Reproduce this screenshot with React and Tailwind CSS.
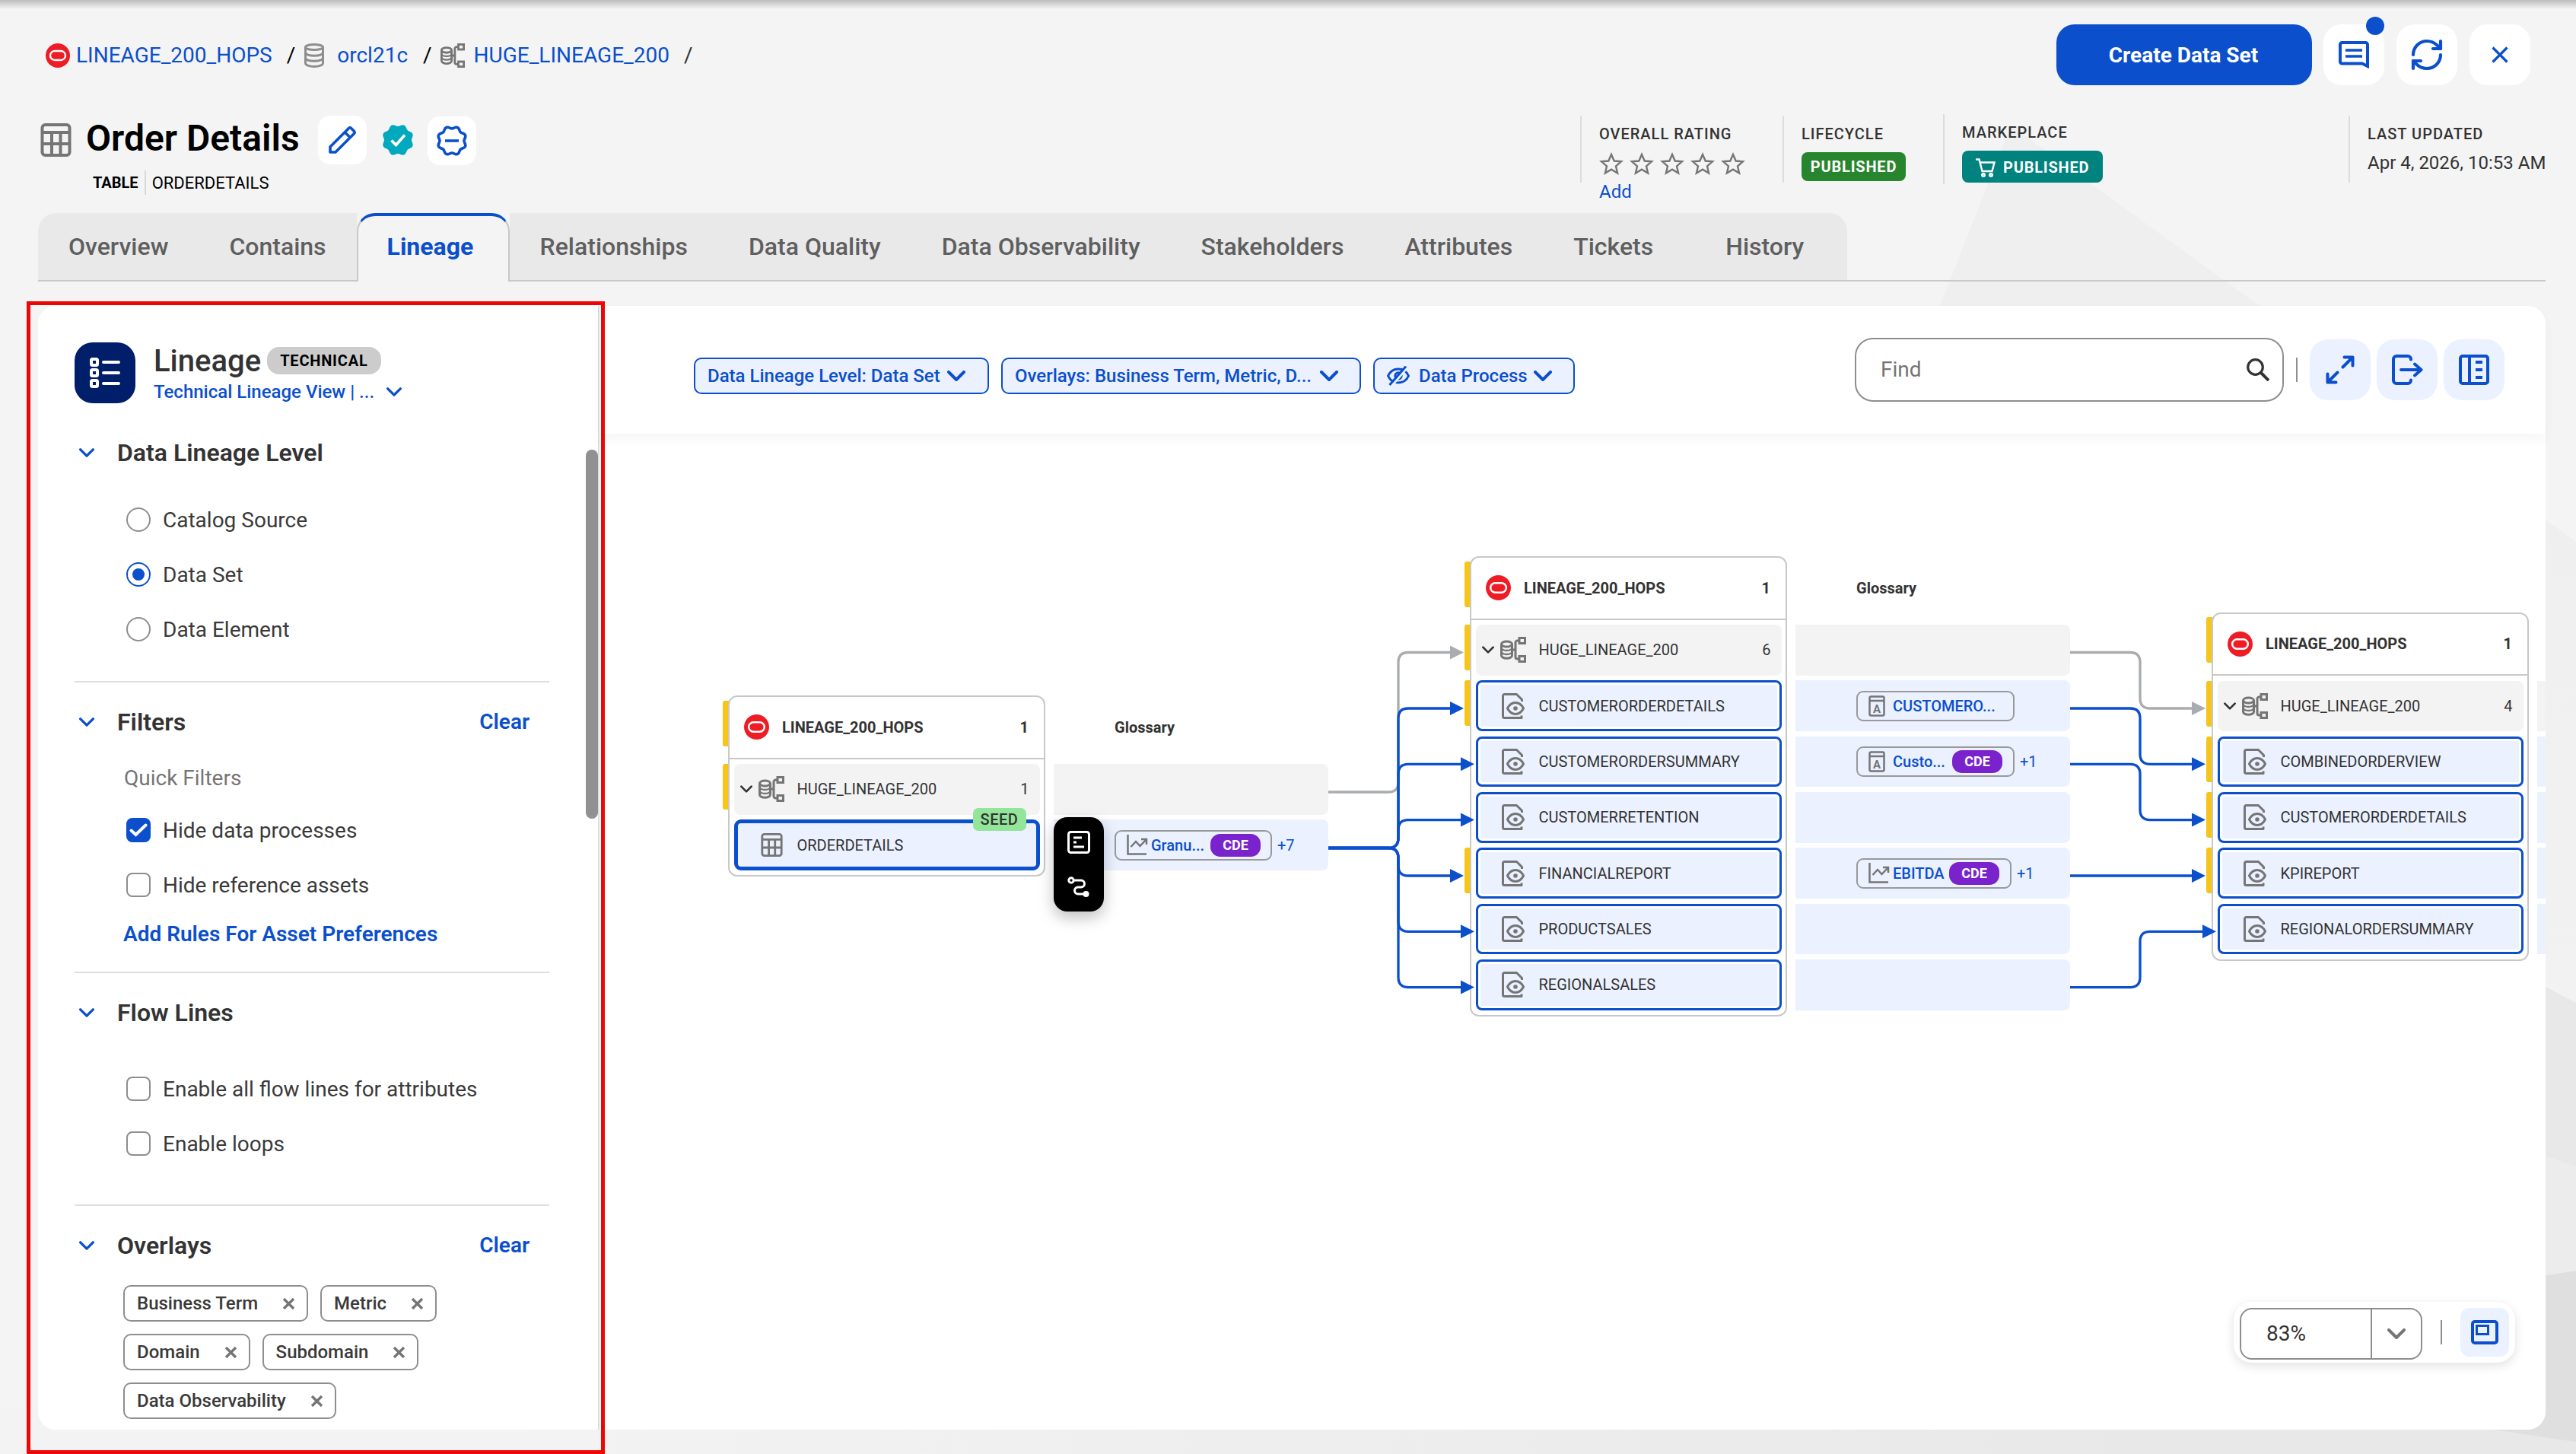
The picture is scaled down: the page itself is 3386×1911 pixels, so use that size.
import React from "react";
import { RefreshCw } from "lucide-react";

const tabs = [
  "Overview",
  "Contains",
  "Lineage",
  "Relationships",
  "Data Quality",
  "Data Observability",
  "Stakeholders",
  "Attributes",
  "Tickets",
  "History",
];

const ROW = 73.33;

// positions are canvas coordinates, right below the toolbar
const nodes = [
  {
    x: 169,
    y: 344,
    bars: [0, 1],
    schemaCount: 1,
    rows: [{ name: "ORDERDETAILS", seed: true, term: { label: "Granu...", icon: "metric", cde: true, more: "+7", width: "w-[207px]" } }],
  },
  {
    x: 1144,
    y: 161,
    bars: [0, 1, 2, 5],
    schemaCount: 6,
    rows: [
      { name: "CUSTOMERORDERDETAILS", term: { label: "CUSTOMERO...", icon: "term", width: "w-[208px]" } },
      { name: "CUSTOMERORDERSUMMARY", term: { label: "Custo...", icon: "term", cde: true, more: "+1", width: "w-[208px]" } },
      { name: "CUSTOMERRETENTION" },
      { name: "FINANCIALREPORT", term: { label: "EBITDA", icon: "metric", cde: true, more: "+1", width: "w-[204px]" } },
      { name: "PRODUCTSALES" },
      { name: "REGIONALSALES" },
    ],
  },
  {
    x: 2119,
    y: 234.5,
    bars: [0, 1, 2, 3, 4],
    schemaCount: 4,
    hideGlossaryTitle: true,
    rows: [
      { name: "COMBINEDORDERVIEW" },
      { name: "CUSTOMERORDERDETAILS" },
      { name: "KPIREPORT" },
      { name: "REGIONALORDERSUMMARY" },
    ],
  },
];

const edges = [
  { from: [958, 471], mid: 1050, to: [1136, 287.5], gray: true },
  { from: [958, 544.5], mid: 1050, to: [1136, 361] },
  { from: [958, 544.5], mid: 1050, to: [1150, 434.3] },
  { from: [958, 544.5], mid: 1050, to: [1150, 507.6] },
  { from: [958, 544.5], mid: 1050, to: [1136, 581] },
  { from: [958, 544.5], mid: 1050, to: [1150, 654.3] },
  { from: [958, 544.5], mid: 1050, to: [1150, 727.6] },
  { from: [1933, 287.5], mid: 2025, to: [2111, 361], gray: true },
  { from: [1933, 361], mid: 2025, to: [2111, 434.3] },
  { from: [1933, 434.3], mid: 2025, to: [2111, 507.6] },
  { from: [1933, 581], mid: 2025, to: [2111, 581] },
  { from: [1933, 727.6], mid: 2025, to: [2125, 654.3] },
];

const edgePath = ({ from, mid, to }) => {
  const [x1, y1] = from;
  const [x2, y2] = to;
  if (y1 === y2) return `M${x1} ${y1}H${x2 - 14}`;
  const r = 13 * Math.sign(y2 - y1);
  return `M${x1} ${y1}H${mid - 13}Q${mid} ${y1} ${mid} ${y1 + r}V${y2 - r}Q${mid} ${y2} ${mid + 13} ${y2}H${x2 - 14}`;
};

// wavy seal outline used by the certification badges
const sealPath = (c, r, amp) => {
  const pts = [];
  for (let i = 0; i < 96; i++) {
    const a = (i / 96) * Math.PI * 2;
    const d = r + amp * Math.cos(8 * a + Math.PI);
    pts.push(`${(c + d * Math.cos(a)).toFixed(2)} ${(c + d * Math.sin(a)).toFixed(2)}`);
  }
  return `M${pts.join("L")}Z`;
};

const OracleIcon = ({ className }) => (
  <svg viewBox="0 0 32 32" className={className}>
    <circle cx="16" cy="16" r="16" fill="#ee1c25" />
    <rect x="6" y="10" width="20" height="12" rx="6" fill="none" stroke="#fff" strokeWidth="2.4" />
  </svg>
);

const DatabaseIcon = ({ className }) => (
  <svg viewBox="0 0 26 32" fill="none" stroke="#8e8e8e" strokeWidth="3" className={className}>
    <ellipse cx="13" cy="5" rx="11.5" ry="3.5" />
    <path d="M1.5 5v21c0 2.5 5 4.5 11.5 4.5s11.5-2 11.5-4.5V5" />
    <path d="M1.5 12c0 2.5 5 4.3 11.5 4.3S24.5 14.500 24.5 12M1.5 19c0 2.5 5 4.3 11.5 4.3s11.5-1.8 11.5-4.3" />
  </svg>
);

const SchemaIcon = ({ className }) => (
  <svg viewBox="0 0 34 34" fill="none" stroke="#757575" strokeWidth="3" className={className}>
    <ellipse cx="8.5" cy="9.5" rx="7" ry="3.5" />
    <path d="M1.5 9.5v15c0 2 3 3.7 7 3.7s7-1.7 7-3.7v-15" />
    <path d="M1.5 14.5c0 2 3 3.5 7 3.5s7-1.5 7-3.5M1.5 19.5c0 2 3 3.5 7 3.5s7-1.5 7-3.5" strokeWidth="2.5" />
    <path d="M15.5 17H20M24.5 5H22.5a2.5 2.5 0 0 0-2.5 2.5v19a2.5 2.5 0 0 0 2.5 2.5h2" />
    <rect x="25" y="1.5" width="7.5" height="7" />
    <rect x="25" y="25.5" width="7.5" height="7" />
  </svg>
);

const TableIcon = ({ className }) => (
  <svg viewBox="0 0 40 44" fill="none" stroke="#757575" strokeWidth="4" className={className}>
    <rect x="2" y="2" width="36" height="40" rx="4" />
    <path d="M2 12H38M2 27H38M14.5 12v30M26 12v30" />
  </svg>
);

const ViewIcon = () => (
  <svg viewBox="0 0 30 34" fill="none" stroke="#757575" strokeWidth="3" strokeLinejoin="round" className="h-[34px] w-[30px]">
    <path d="M26.5 11V8.5L19.5 1.5H3.5a2 2 0 0 0-2 2v27a2 2 0 0 0 2 2H26V29.5" />
    <path d="M7.5 20C10 15 14 12.5 18 12.5S26 15 28.5 20C26 25 22 27.5 18 27.5S10 25 7.5 20Z" />
    <circle cx="18" cy="20" r="2.8" fill="#757575" stroke="none" />
  </svg>
);

const MetricIcon = () => (
  <svg viewBox="0 0 28 27" fill="none" stroke="#757575" strokeWidth="2.5" className="h-[27px] w-[28px]">
    <path d="M1.5 0V25.5H26" />
    <path d="M5.5 16L12 9l5.5 6L25.5 6.500M19 6h7v7" />
  </svg>
);

const TermIcon = () => (
  <svg viewBox="0 0 22 28" fill="none" stroke="#757575" strokeWidth="2.5" className="h-7 w-[22px]">
    <rect x="1.5" y="1.5" width="19" height="25" rx="2" />
    <path d="M1.5 7H20.5" />
    <text x="11" y="22.5" textAnchor="middle" fontSize="15" fontWeight="700" fill="#757575" stroke="none">A</text>
  </svg>
);

const Chevron = ({ className, stroke = 4 }) => (
  <svg viewBox="0 0 24 14" fill="none" stroke="currentColor" strokeWidth={stroke} strokeLinecap="round" strokeLinejoin="round" className={className}>
    <path d="M2 2l10 10L22 2" />
  </svg>
);

const Cross = ({ className, stroke = 3 }) => (
  <svg viewBox="0 0 22 22" stroke="currentColor" strokeWidth={stroke} className={className}>
    <path d="M1.5 1.5l19 19M20.5 1.5l-19 19" />
  </svg>
);

const Star = () => (
  <svg viewBox="0 0 32 30" fill="none" stroke="#757575" strokeWidth="2.4" className="h-[30px] w-8">
    <path d="M16 3l3.7 8.5 9.3.8-7 6.1 2.1 9.1L16 22.7l-8.1 4.8L10 18.400l-7-6.1 9.3-.8z" />
  </svg>
);

const Breadcrumbs = () => (
  <nav className="flex h-20 items-center pt-px text-[28px] text-[#0b4fcc]">
    <OracleIcon className="h-8 w-8" />
    <a className="ml-2">LINEAGE_200_HOPS</a>
    <span className="ml-[19px] text-black">/</span>
    <DatabaseIcon className="ml-3 h-8 w-[26px]" />
    <a className="ml-[17px]">orcl21c</a>
    <span className="ml-5 text-black">/</span>
    <SchemaIcon className="ml-[11px] h-8 w-8" />
    <a className="ml-3">HUGE_LINEAGE_200</a>
    <span className="ml-[19px] text-[#333]">/</span>
  </nav>
);

const HeaderActions = () => (
  <div className="flex h-20 text-[#0b4fcc]">
    <button className="flex w-[336px] items-center justify-center rounded-[24px] bg-[#0b4fcc] pt-px pr-0.5 text-[28px] font-bold text-white">Create Data Set</button>
    <button className="relative ml-[15px] flex w-20 items-center justify-center rounded-[24px] bg-white">
      <svg viewBox="0 0 40 36" fill="none" stroke="currentColor" strokeWidth="4" className="h-9 w-10">
        <path d="M4.5 2h31a2.5 2.5 0 0 1 2.5 2.5V33L31 29.5H4.5A2.5 2.5 0 0 1 2 27V4.5A2.5 2.5 0 0 1 4.5 2z" />
        <path d="M9 12H31M9 20H31" strokeWidth="3.6" />
      </svg>
      <span className="absolute -top-[10px] right-0 h-6 w-6 rounded-full bg-[#0b4fcc]" />
    </button>
    <button className="ml-4 flex w-20 items-center justify-center rounded-[24px] bg-white">
      <RefreshCw size={48} strokeWidth={2.1} />
    </button>
    <button className="ml-4 flex w-20 items-center justify-center rounded-[24px] bg-white">
      <Cross className="h-[22px] w-[22px]" stroke={3.2} />
    </button>
  </div>
);

const AssetTitle = () => (
  <div className="flex flex-col pt-10">
    <div className="flex h-16 items-center">
      <TableIcon className="ml-[3px] h-[44px] w-[41px]" />
      <h1 className="ml-[19px] w-[281px] pb-[5px] text-[48px] leading-none font-semibold whitespace-nowrap text-black">Order Details</h1>
      <button className="ml-6 flex h-16 w-16 items-center justify-center rounded-[16px] bg-white">
        <svg viewBox="0 0 36 36" fill="none" stroke="#0b4fcc" strokeWidth="3.6" strokeLinejoin="round" className="h-9 w-9">
          <path d="M2 34v-7L26.5 2.5a2 2 0 0 1 3 0l4 4a2 2 0 0 1 0 3L9 34zM21.5 8l6.5 6.5" />
        </svg>
      </button>
      <svg viewBox="0 0 42 42" className="ml-5 h-[42px] w-[42px]">
        <path d={sealPath(21, 19.5, 1.5)} fill="#00a9bd" />
        <path d="M12.5 21.5l6 6L30 14.5" fill="none" stroke="#fff" strokeWidth="3.6" />
      </svg>
      <button className="mt-0.5 ml-[18px] flex h-16 w-16 items-center justify-center rounded-[16px] bg-white">
        <svg viewBox="0 0 42 42" fill="none" stroke="#0b4fcc" strokeWidth="3.6" strokeLinejoin="round" className="h-[42px] w-[42px]">
          <path d={sealPath(21, 17.5, 1.5)} />
          <path d="M12 21H30" />
        </svg>
      </button>
    </div>
    <div className="mt-2 ml-[72px] flex h-8 items-center">
      <span className="text-[20px] font-bold text-black">TABLE</span>
      <span className="ml-2 h-8 w-0.5 bg-[#d9d9d9]" />
      <span className="ml-2 text-[22px] text-black">ORDERDETAILS</span>
    </div>
  </div>
);

const MetaLabel = ({ children }) => (
  <div className="text-[20px] leading-6 font-medium tracking-[1px] text-[#333]">{children}</div>
);

const AssetMeta = () => (
  <div className="flex items-start pt-10">
    <div className="h-[88px] w-[266px] border-l-2 border-[#dcdcdc] pt-3 pl-[23px]">
      <MetaLabel>OVERALL RATING</MetaLabel>
      <div className="mt-3 flex gap-2">
        <Star />
        <Star />
        <Star />
        <Star />
        <Star />
      </div>
      <a className="mt-2 block text-[24px] leading-7 text-[#0b4fcc]">Add</a>
    </div>
    <div className="h-[88px] w-[211px] border-l-2 border-[#dcdcdc] pt-3 pl-[23px]">
      <MetaLabel>LIFECYCLE</MetaLabel>
      <span className="mt-3 flex h-[38px] w-[137px] items-center justify-center rounded-[8px] bg-[#27862d] text-[20px] font-bold tracking-[0.8px] text-white">PUBLISHED</span>
    </div>
    <div className="-mt-0.5 h-[92px] w-[533px] border-l-2 border-[#dcdcdc] pt-3 pl-[23px]">
      <MetaLabel>MARKEPLACE</MetaLabel>
      <span className="mt-3 flex h-[42px] w-[185px] items-center rounded-[8px] bg-[#00827f] pt-0.5 pl-[18px] text-[20px] font-bold tracking-[0.8px] text-white">
        <svg viewBox="0 0 26 25" fill="none" stroke="#fff" strokeWidth="2.4" className="h-[25px] w-[26px]">
          <path d="M0 1.5H4.5L8.5 17H21.5L24.5 5.500H6" />
          <circle cx="10" cy="22" r="1.8" />
          <circle cx="20" cy="22" r="1.8" />
        </svg>
        <span className="ml-2.5">PUBLISHED</span>
      </span>
    </div>
    <div className="h-[88px] w-[259px] border-l-2 border-[#dcdcdc] pt-3 pl-[23px]">
      <MetaLabel>LAST UPDATED</MetaLabel>
      <div className="mt-3 text-[24px] leading-7 whitespace-nowrap text-[#333]">Apr 4, 2026, 10:53 AM</div>
    </div>
  </div>
);

const TabBar = () => (
  <div className="flex h-[90px] text-[32px] text-[#5f5f5f]">
    <div className="flex">
      {tabs.map((tab, i) =>
        tab === "Lineage" ? (
          <div key={tab} className="flex w-[201px] items-center rounded-t-[24px] border-x-2 border-t-4 border-x-[#c8c8c8] border-t-[#0b4fcc] bg-[#f4f4f4] pb-1.5 pl-[38px] font-bold text-[#0b4fcc]">
            {tab}
          </div>
        ) : (
          <div
            key={tab}
            className={
              "flex min-w-[200px] items-center border-b-2 border-[#c8c8c8] bg-[#e9e9e9] px-10 font-medium" +
              (i === 0 ? " rounded-tl-[24px]" : "") +
              (i === tabs.length - 1 ? " rounded-tr-[24px]" : "")
            }
          >
            {tab}
          </div>
        )
      )}
    </div>
    <div className="flex-1 border-b-2 border-[#c8c8c8]" />
  </div>
);

const SectionTitle = ({ title, clearable }) => (
  <div className="flex h-10 items-center pl-1.5">
    <Chevron className="h-[12px] w-5 text-[#0b4fcc]" />
    <h3 className="ml-[30px] text-[32px] font-semibold text-[#333]">{title}</h3>
    {clearable && <a className="mr-[26px] ml-auto text-[28px] font-semibold text-[#0b4fcc]">Clear</a>}
  </div>
);

const Radio = ({ label, checked }) => (
  <label className="flex h-8 items-center text-[28px] text-[#3a3a3a]">
    <span className={"flex h-8 w-8 items-center justify-center rounded-full border-2 " + (checked ? "border-[#0b4fcc]" : "border-[#8e8e8e]")}>
      {checked && <span className="h-4 w-4 rounded-full bg-[#0b4fcc]" />}
    </span>
    <span className="ml-4 pt-px">{label}</span>
  </label>
);

const Checkbox = ({ label, checked }) => (
  <label className="flex h-8 items-center text-[28px] text-[#3a3a3a]">
    {checked ? (
      <span className="flex h-8 w-8 items-center justify-center rounded-[8px] bg-[#0b4fcc]">
        <svg viewBox="0 0 24 18" fill="none" stroke="#fff" strokeWidth="4" strokeLinecap="round" className="h-[18px] w-6">
          <path d="M2.5 9.5l6 5.5L21.5 2.5" />
        </svg>
      </span>
    ) : (
      <span className="h-8 w-8 rounded-[8px] border-2 border-[#8e8e8e]" />
    )}
    <span className="ml-4 pt-px">{label}</span>
  </label>
);

const Chip = ({ label }) => (
  <span className="flex h-12 items-center rounded-[10px] border-2 border-[#8e8e8e] px-4 text-[24px] font-medium text-[#3a3a3a]">
    {label}
    <Cross className="ml-[33px] h-[15px] w-[15px] text-[#757575]" stroke={5} />
  </span>
);

const Sidebar = () => (
  <aside className="relative h-full w-[738px] shrink-0 overflow-hidden rounded-l-[24px] border-r-2 border-[#dcdcdc] bg-white pr-16 pl-12">
    <div className="flex h-[173px] items-start pt-12">
      <div className="flex h-20 w-20 items-center justify-center rounded-[24px] bg-[#001e69]">
        <svg viewBox="0 0 40 40" fill="none" stroke="#fff" strokeWidth="4" className="h-10 w-10">
          <rect x="2" y="2" width="8" height="8" rx="1.5" />
          <rect x="2" y="16" width="8" height="8" rx="1.5" />
          <rect x="2" y="30" width="8" height="8" rx="1.5" />
          <path d="M18 6H38M18 20H38M18 34H38" strokeLinecap="round" />
        </svg>
      </div>
      <div className="ml-6">
        <div className="flex h-12 items-center">
          <h2 className="pt-px text-[40px] leading-none font-medium text-[#333]">Lineage</h2>
          <span className="ml-2 flex h-9 items-center rounded-[16px] bg-[#ccc] px-[17px] text-[20px] font-bold tracking-[0.8px] text-black">TECHNICAL</span>
        </div>
        <div className="mt-0.5 flex h-[30px] items-center text-[24px] font-medium text-[#0b4fcc]">
          Technical Lineage View | ...
          <Chevron className="ml-4 h-[12px] w-5" />
        </div>
      </div>
    </div>

    <section className="h-[322px] border-b-2 border-[#dedede]">
      <SectionTitle title="Data Lineage Level" />
      <div className="mt-[52px] ml-[68px] flex flex-col gap-10">
        <Radio label="Catalog Source" />
        <Radio label="Data Set" checked />
        <Radio label="Data Element" />
      </div>
    </section>

    <section className="h-[382px] border-b-2 border-[#dedede] pt-8">
      <SectionTitle title="Filters" clearable />
      <div className="mt-[38px] ml-[65px] text-[28px] leading-8 text-[#757575]">Quick Filters</div>
      <div className="mt-9 ml-[68px] flex flex-col gap-10">
        <Checkbox label="Hide data processes" checked />
        <Checkbox label="Hide reference assets" />
      </div>
      <div className="mt-[33px] ml-[64px] text-[28px] leading-8 font-semibold whitespace-nowrap text-[#0b4fcc]">Add Rules For Asset Preferences</div>
    </section>

    <section className="h-[306px] border-b-2 border-[#dedede] pt-8">
      <SectionTitle title="Flow Lines" />
      <div className="mt-16 ml-[68px] flex flex-col gap-10">
        <Checkbox label="Enable all flow lines for attributes" />
        <Checkbox label="Enable loops" />
      </div>
    </section>

    <section className="pt-8">
      <SectionTitle title="Overlays" clearable />
      <div className="mt-8 ml-16 flex w-[440px] flex-wrap gap-4">
        <Chip label="Business Term" />
        <Chip label="Metric" />
        <Chip label="Domain" />
        <Chip label="Subdomain" />
        <Chip label="Data Observability" />
      </div>
    </section>

    <div className="absolute top-[189px] right-0 h-[485px] w-4 rounded-full bg-[#919191]" />
  </aside>
);

const FilterButton = ({ children, className }) => (
  <button className={"flex h-12 items-center rounded-[10px] border-2 border-[#0b4fcc] bg-[#ebf1ff] px-4 text-[24px] font-medium whitespace-nowrap text-[#0b4fcc] " + className}>
    {children}
  </button>
);

const ToolButton = ({ children }) => (
  <button className="flex h-20 w-20 items-center justify-center rounded-[24px] bg-[#ebf1ff] text-[#0b4fcc]">{children}</button>
);

const Toolbar = () => (
  <div className="relative z-10 flex h-[168px] items-start rounded-tr-[24px] bg-white pt-[42px] pr-[54px] pl-[124px] shadow-[0_8px_16px_rgba(0,0,0,0.04)]">
    <div className="flex gap-4 pt-[26px]">
      <FilterButton className="w-[388px]">
        Data Lineage Level: Data Set
        <Chevron className="ml-[9px] h-[14px] w-6" />
      </FilterButton>
      <FilterButton className="w-[473px]">
        Overlays: Business Term, Metric, D...
        <Chevron className="ml-[11px] h-[14px] w-6" />
      </FilterButton>
      <FilterButton className="w-[265px]">
        <svg viewBox="0 0 30 26" fill="none" stroke="currentColor" strokeWidth="3" className="mr-3 h-[26px] w-[30px]">
          <path d="M1.5 13C4 7.5 9 4 15 4S26 7.5 28.5 13C26 18.5 21 22 15 22S4 18.5 1.5 13Z" />
          <circle cx="15" cy="13" r="4.2" />
          <path d="M6.5 26L27 2" stroke="#ebf1ff" />
          <path d="M3.5 25L25 0.5" />
        </svg>
        Data Process
        <Chevron className="ml-2 h-[14px] w-6" />
      </FilterButton>
    </div>
    <div className="ml-auto flex h-[84px] w-[564px] items-center rounded-[24px] border-2 border-[#8e8e8e] pr-[17px] pl-8 text-[28px] text-[#757575]">
      Find
      <svg viewBox="0 0 30 30" fill="none" stroke="#333" strokeWidth="3.2" className="ml-auto h-[30px] w-[30px]">
        <circle cx="11.5" cy="11.5" r="9.8" />
        <path d="M18.5 18.5L29 29" strokeWidth="4" />
      </svg>
    </div>
    <div className="mt-[26px] ml-4 h-8 w-0.5 bg-[#8e8e8e]" />
    <div className="mt-0.5 ml-4 flex gap-2">
      <ToolButton>
        <svg viewBox="0 0 38 38" fill="none" stroke="currentColor" strokeWidth="4" strokeLinecap="round" strokeLinejoin="round" className="h-[38px] w-[38px]">
          <path d="M22.5 15.5L35.5 2.5M24.5 2.5H35.5V13.5M15.5 22.5L2.5 35.5M2.5 24.5V35.5H13.5" />
        </svg>
      </ToolButton>
      <ToolButton>
        <svg viewBox="0 0 42 42" fill="none" stroke="currentColor" strokeWidth="4" strokeLinecap="round" strokeLinejoin="round" className="h-[42px] w-[42px]">
          <path d="M26 7.5V7a4 4 0 0 0-4-4H7a4 4 0 0 0-4 4V35a4 4 0 0 0 4 4H22a4 4 0 0 0 4-4V34.5" />
          <path d="M13 21H39.5M31 13.5L39.5 21 31 28.5" />
        </svg>
      </ToolButton>
      <ToolButton>
        <svg viewBox="0 0 40 40" fill="none" stroke="currentColor" strokeWidth="4" className="h-10 w-10">
          <rect x="2" y="2" width="36" height="36" rx="3" />
          <path d="M14 2V38M22 10H31M22 20H31M22 30H31" />
        </svg>
      </ToolButton>
    </div>
  </div>
);

const CdePill = () => (
  <span className="ml-2 flex h-[30px] w-[66px] shrink-0 items-center justify-center rounded-[13px] bg-[#7a22cc] text-[18px] font-bold text-white">CDE</span>
);

const GlossaryRow = ({ term, gray }) => (
  <div className={"flex h-[66.67px] items-center rounded-r-[8px] pl-20 " + (gray ? "bg-[#f3f3f3]" : "bg-[#ebf1ff]")}>
    {term && (
      <>
        <div className={"flex h-10 items-center rounded-[9px] border-2 border-[#999] pl-3 text-[20px] font-medium text-[#0b4fcc] " + term.width}>
          <span className="flex w-[34px] items-center pl-0.5">{term.icon === "metric" ? <MetricIcon /> : <TermIcon />}</span>
          <span className={term.label === "EBITDA" ? "w-[66px]" : term.cde ? "w-[70px]" : ""}>{term.label}</span>
          {term.cde && <CdePill />}
        </div>
        {term.more && <span className="ml-[7px] text-[20px] text-[#0b4fcc]">{term.more}</span>}
      </>
    )}
  </div>
);

const LineageNode = ({ node }) => (
  <>
    {node.bars.map((b) => (
      <div
        key={b}
        className="absolute h-[60px] w-2 rounded-l-[3px] bg-[#f7c518]"
        style={{ left: node.x - 7, top: b === 0 ? node.y + 6.5 : node.y + 90 + ROW * (b - 1) }}
      />
    ))}
    <div className="absolute w-[417px] rounded-[12px] border-2 border-[#c8c8c8] bg-white pb-[6.5px]" style={{ left: node.x, top: node.y }}>
      <div className="flex h-[81.5px] items-center border-b-2 border-[#c8c8c8] pr-5 pl-[19px] text-[20px] font-bold text-[#333]">
        <OracleIcon className="h-[33px] w-[33px]" />
        <span className="ml-[17px]">LINEAGE_200_HOPS</span>
        <span className="ml-auto">1</span>
      </div>
      <div className="mx-[5.5px] mt-[6.5px] flex flex-col gap-[6.67px] text-[20px] text-[#333]">
        <div className="flex h-[66.67px] items-center rounded-[8px] bg-[#f3f3f3] pr-[14px] pl-2">
          <Chevron className="h-[10px] w-4" />
          <SchemaIcon className="ml-2 h-[34px] w-[34px]" />
          <span className="ml-[17px]">HUGE_LINEAGE_200</span>
          <span className="ml-auto">{node.schemaCount}</span>
        </div>
        {node.rows.map((row) =>
          row.seed ? (
            <div key={row.name} className="relative flex h-[66.67px] items-center rounded-[9px] border-[5px] border-[#0b4fcc] bg-[#ebf1ff] pl-[29px]">
              <TableIcon className="h-[31px] w-[31px]" />
              <span className="ml-[18px]">{row.name}</span>
              <span className="absolute -top-5 right-[13px] flex h-[30px] w-[70px] items-center justify-center rounded-[7px] bg-[#93e59a] font-medium tracking-[0.5px]">SEED</span>
            </div>
          ) : (
            <div key={row.name} className="h-[66.67px] rounded-[8px] border-[3px] border-[#0b4fcc] p-[3px]">
              <div className="flex h-full items-center rounded-[2px] bg-[#ebf1ff] pl-7">
                <ViewIcon />
                <span className="ml-[19px]">{row.name}</span>
              </div>
            </div>
          )
        )}
      </div>
    </div>
    <div className="absolute w-[361px]" style={{ left: node.x + 428, top: node.y }}>
      <div className="flex h-[90px] items-center pb-[7px] pl-20 text-[20px] font-bold text-[#333]">{!node.hideGlossaryTitle && "Glossary"}</div>
      <div className="flex flex-col gap-[6.67px]">
        <GlossaryRow gray />
        {node.rows.map((row) => (
          <GlossaryRow key={row.name} term={row.term} />
        ))}
      </div>
    </div>
  </>
);

const NodeActions = () => (
  <div className="absolute top-[504px] left-[597px] flex h-[124px] w-[66px] flex-col items-center justify-between rounded-[18px] bg-black py-[18px] shadow-[0_8px_20px_rgba(0,0,0,0.25)]">
    <svg viewBox="0 0 30 30" fill="none" stroke="#fff" strokeWidth="3" className="h-[30px] w-[30px]">
      <rect x="1.5" y="1.5" width="27" height="27" rx="3" />
      <path d="M8 9H19M8 15H12M8 21H22" />
    </svg>
    <svg viewBox="0 0 30 28" fill="none" stroke="#fff" strokeWidth="3" className="h-7 w-[30px]">
      <circle cx="5" cy="5" r="3.2" />
      <path d="M8.5 5H18a4 4 0 0 1 0 9H14a4.5 4.5 0 0 0 0 9H23" />
      <circle cx="24.5" cy="23" r="4" fill="#fff" stroke="none" />
    </svg>
  </div>
);

const ZoomControl = () => (
  <div className="absolute right-10 bottom-[88px] flex h-20 w-[370px] items-start rounded-[24px] bg-white p-2 shadow-[0_4px_14px_rgba(0,0,0,0.12)]">
    <div className="flex h-[68px] w-[240px] rounded-[16px] border-2 border-[#8e8e8e]">
      <div className="flex flex-1 items-center pl-[33px] text-[28px] text-[#333]">83%</div>
      <div className="flex w-[66px] items-center justify-center border-l-2 border-[#8e8e8e]">
        <Chevron className="h-[14px] w-6 text-[#757575]" />
      </div>
    </div>
    <div className="mt-4 ml-6 h-8 w-0.5 bg-[#8e8e8e]" />
    <div className="ml-6 flex h-16 w-16 items-center justify-center rounded-[12px] bg-[#ebf1ff]">
      <svg viewBox="0 0 36 32" fill="none" stroke="#0b4fcc" className="h-8 w-9">
        <rect x="2" y="2" width="32" height="28" rx="3" strokeWidth="4" />
        <rect x="7.5" y="7.5" width="15" height="11" strokeWidth="3" />
      </svg>
    </div>
  </div>
);

const LineageCanvas = () => (
  <div className="relative flex-1 overflow-hidden rounded-br-[24px] bg-white">
    {nodes.map((node) => (
      <LineageNode key={node.x} node={node} />
    ))}
    <svg className="absolute inset-0 h-full w-full" fill="none">
      {edges.map((e, i) => {
        const color = e.gray ? "#a9acae" : "#0b4fcc";
        const [x, y] = e.to;
        return (
          <g key={i}>
            <path d={edgePath(e)} stroke={color} strokeWidth="3.3" />
            <path d={`M${x} ${y}l-18 -9v18z`} fill={color} />
          </g>
        );
      })}
    </svg>
    <NodeActions />
    <ZoomControl />
  </div>
);

const Backdrop = () => (
  <svg viewBox="0 0 3386 1911" className="absolute inset-0 h-full w-full">
    <defs>
      <linearGradient id="floor" x1="0" x2="1">
        <stop offset="0.2" stopColor="#f3f3f3" />
        <stop offset="0.85" stopColor="#e8e8e8" />
      </linearGradient>
      <linearGradient id="side" x1="0" y1="0" x2="0" y2="1">
        <stop offset="0" stopColor="#efefef" />
        <stop offset="1" stopColor="#f2f2f2" />
      </linearGradient>
    </defs>
    <path d="M2643 165L2550 402H2970Z" fill="#efefef" />
    <path d="M3346 683L3386 712V1318L3346 1293Z" fill="url(#side)" />
    <path d="M3330 1288L3386 1318V1533L3330 1515Z" fill="#e8e8e8" />
    <path d="M3330 1515L3386 1533V1670L3330 1677Z" fill="#ececec" />
    <rect y="1850" width="3386" height="61" fill="url(#floor)" />
    <path d="M3250 1690L3386 1670V1895L3250 1875Z" fill="#dfdfdf" />
  </svg>
);

const App = () => {
  return (
    <div className="relative flex h-[1911px] w-[3386px] flex-col overflow-hidden bg-[#f4f4f4] font-['Roboto',sans-serif] leading-normal">
      <Backdrop />
      <div className="absolute inset-x-0 top-0 h-3 bg-gradient-to-b from-[#bdbdbd] to-[#f4f4f4]" />

      <header className="relative flex h-28 items-start justify-between px-[60px] pt-8">
        <Breadcrumbs />
        <HeaderActions />
      </header>

      <div className="relative flex h-[168px] justify-between pr-10 pl-[50px]">
        <AssetTitle />
        <AssetMeta />
      </div>

      <div className="relative pr-10 pl-[50px]">
        <TabBar />
      </div>

      <main className="relative mt-8 mr-10 ml-[50px] flex h-[1477px] rounded-[24px] bg-white">
        <Sidebar />
        <div className="flex min-w-0 flex-1 flex-col">
          <Toolbar />
          <LineageCanvas />
        </div>
      </main>

      {/* highlight around the options panel */}
      <div className="pointer-events-none absolute top-[396px] left-[35px] z-20 h-[1515px] w-[760px] border-[5px] border-[#ee0505]" />
    </div>
  );
};

export default App;
